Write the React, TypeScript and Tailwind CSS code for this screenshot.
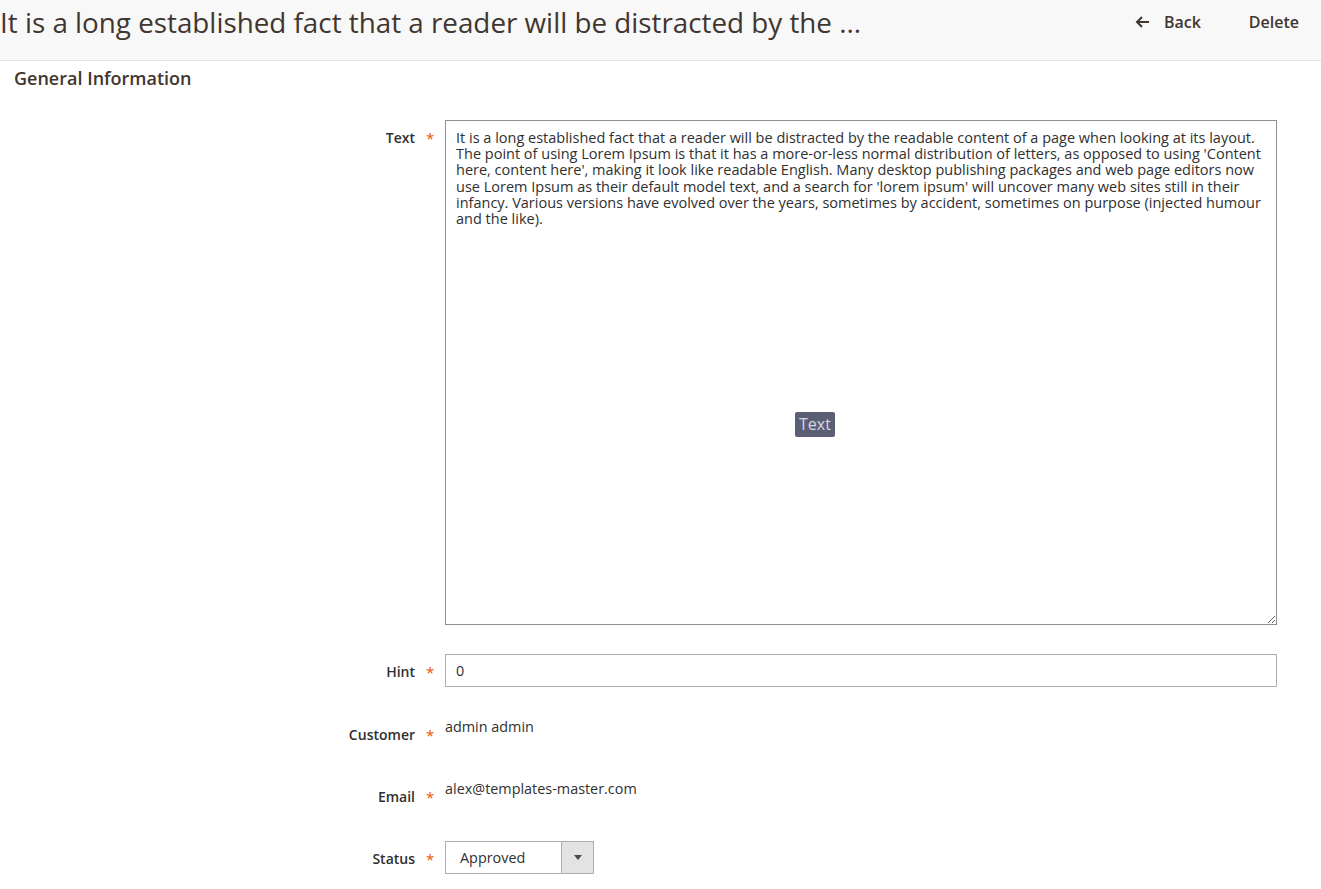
import React from 'react';

const longText =
  "It is a long established fact that a reader will be distracted by the readable content of a page when looking at its layout. The point of using Lorem Ipsum is that it has a more-or-less normal distribution of letters, as opposed to using 'Content here, content here', making it look like readable English. Many desktop publishing packages and web page editors now use Lorem Ipsum as their default model text, and a search for 'lorem ipsum' will uncover many web sites still in their infancy. Various versions have evolved over the years, sometimes by accident, sometimes on purpose (injected humour and the like).";

const Label: React.FC<{ text: string }> = ({ text }) => (
  <div className="w-[445px] shrink-0 flex justify-end pr-[11px] pt-[9px] text-[14px] leading-[18px] font-semibold text-[#303030]">
    <span>{text}</span>
    <span className="ml-[11px] w-[8px] text-[#eb5202] text-[15px] leading-[18px] font-normal">*</span>
  </div>
);

export default function App() {
  return (
    <div className="w-[1321px] min-h-[889px] bg-white overflow-hidden" style={{ fontFamily: '"Open Sans", sans-serif' }}>
      {/* Page header */}
      <header className="h-[61px] bg-[#f8f8f8] border-b border-[#e3e3e3] flex items-start justify-between">
        <h1 className="text-[27.8px] leading-[44px] font-normal text-[#41362f] whitespace-nowrap">
          It is a long established fact that a reader will be distracted by the ...
        </h1>
        <div className="flex items-center h-[44px] pr-[22px] text-[16px] font-semibold text-[#41362f]">
          <button className="flex items-center">
            <svg width="15" height="12" viewBox="0 0 15 12" fill="none" stroke="#41362f" strokeWidth="2" className="mr-[14px]">
              <path d="M14 6H2M7 1L2 6l5 5" />
            </svg>
            Back
          </button>
          <button className="ml-[48px]">Delete</button>
        </div>
      </header>

      {/* Fieldset */}
      <div className="pl-[14px] pt-[5px]">
        <h2 className="text-[18px] leading-[24px] font-semibold text-[#41362f]">General Information</h2>
      </div>

      <div className="mt-[30px] flex flex-col gap-[29px]">
        <div className="flex">
          <Label text="Text" />
          <div className="relative w-[832px] h-[505px]">
            <textarea
              readOnly
              defaultValue={longText}
              className="w-full h-full border border-[#8f8f8f] px-[10px] pt-[9px] text-[14.5px] leading-[16.2px] text-[#303030] outline-none resize-y"
            />
            <span className="absolute left-[350px] top-[292px] px-[4px] h-[25px] rounded-[2px] bg-[#5b5f74] text-[#d4d8e6] text-[16px] leading-[25px]">
              Text
            </span>
          </div>
        </div>

        <div className="flex">
          <Label text="Hint" />
          <input
            readOnly
            value="0"
            className="w-[832px] h-[33px] border border-[#adadad] px-[10px] text-[14.4px] text-[#303030] outline-none"
          />
        </div>

        <div className="flex h-[33px] mt-[1px]">
          <Label text="Customer" />
          <div className="pt-[1px] text-[14.4px] leading-[18px] text-[#303030]">admin admin</div>
        </div>

        <div className="flex h-[33px]">
          <Label text="Email" />
          <div className="pt-[1px] text-[14.4px] leading-[18px] text-[#303030]">alex@templates-master.com</div>
        </div>

        <div className="flex h-[33px]">
          <Label text="Status" />
          <div className="w-[149px] h-[33px] border border-[#adadad] flex">
            <span className="flex-1 pl-[14px] text-[14.4px] leading-[31px] text-[#303030]">Approved</span>
            <span className="w-[32px] bg-[#e3e3e3] border-l border-[#adadad] flex items-center justify-center">
              <svg width="8" height="5" viewBox="0 0 8 5">
                <path d="M0 0h8L4 5z" fill="#514943" />
              </svg>
            </span>
          </div>
        </div>
      </div>
    </div>
  );
}
